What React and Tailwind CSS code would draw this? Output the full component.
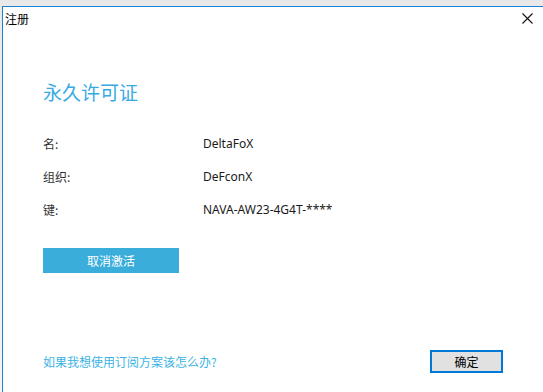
function Row({ label, value }) {
  return (
    <div className="flex h-[33px] items-center text-[12px]">
      <div className="w-[160px] text-[#333]">{label}</div>
      <div className="text-[#1a1a1a]" style={{ fontFamily: '"Noto Sans", "Noto Sans CJK SC", sans-serif' }}>
        {value}
      </div>
    </div>
  )
}

export default function App() {
  return (
    <div
      className="h-[392px] w-[543px] overflow-hidden bg-gradient-to-b from-[#e9e9e9] to-[#f3f3f3] pl-[2px] pt-[6px]"
      style={{ fontFamily: '"Noto Sans CJK SC", "Microsoft YaHei", sans-serif' }}
    >
      <div className="flex h-full flex-col border-l border-t border-[#1883d7] bg-white">
        <div className="flex h-[24px] items-center justify-between pl-[2px] pr-[10px]">
          <span className="text-[12px] text-black">注册</span>
          <svg width="11" height="11" viewBox="0 0 11 11" className="mb-[1px]">
            <path d="M0.5 0.5 L10.5 10.5 M10.5 0.5 L0.5 10.5" stroke="#111" strokeWidth="1.1" />
          </svg>
        </div>

        <div className="flex flex-1 flex-col pl-[40px] pr-[40px]">
          <h1 className="mt-[48px] text-[19px] leading-[26px] font-normal text-[#39aadf]">永久许可证</h1>

          <div className="mt-[22px] flex flex-col">
            <Row label="名:" value="DeltaFoX" />
            <Row label="组织:" value="DeFconX" />
            <Row label="键:" value="NAVA-AW23-4G4T-****" />
          </div>

          <button className="mt-[22px] flex h-[25px] w-[136px] items-center justify-center bg-[#3aaddb] text-[12px] text-white">
            取消激活
          </button>

          <div className="mt-auto mb-[19px] flex items-center justify-between">
            <a className="text-[12px] text-[#3ab3e4]">如果我想使用订阅方案该怎么办?</a>
            <button className="flex h-[23px] w-[73px] items-center justify-center border-2 border-[#0078d7] bg-[#e1e1e1] text-[12px] text-black">
              确定
            </button>
          </div>
        </div>
      </div>
    </div>
  )
}
